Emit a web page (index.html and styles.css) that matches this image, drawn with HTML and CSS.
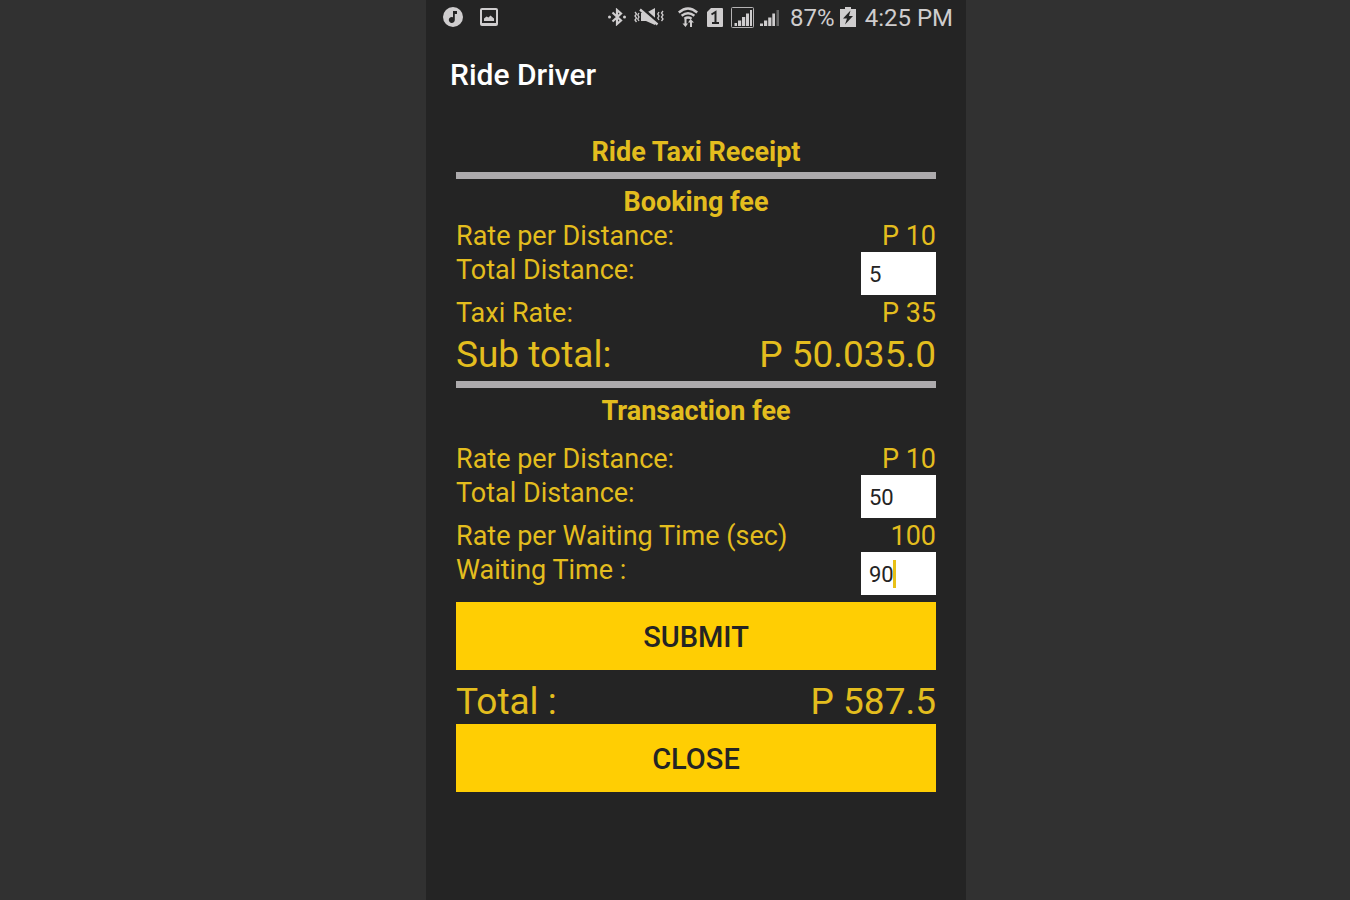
FILE: index.html
```html
<!DOCTYPE html>
<html lang="en">
<head>
<meta charset="utf-8">
<meta name="viewport" content="width=device-width, initial-scale=1">
<title>Ride Driver</title>
<link rel="stylesheet" href="styles.css">
</head>
<body>
<div class="phone">
  <div class="status">
    <div class="status-left">
      <svg width="20" height="20" viewBox="0 0 20 20" aria-label="Music"><circle cx="10" cy="10" r="10" fill="#cfcdce"/><path d="M10 4h4v3h-2.200v6a3 3 0 1 1-1.800-2.800z" fill="#242424"/></svg>
      <svg width="18" height="18" viewBox="0 0 18 18" aria-label="Picture"><rect x="1" y="1" width="16" height="16" rx="1" fill="none" stroke="#cfcdce" stroke-width="2"/><path d="M1 15h16v2H1zM4 13v-2.500l2.500-2 2 1 2-2 3.500 3v2.500z" fill="#cfcdce"/></svg>
    </div>
    <div class="status-right">
      <svg class="bluetooth" width="18" height="18" viewBox="0 0 18 18" aria-label="Bluetooth"><path d="M4.500 4.500l8.500 8L9 16V2l4 3.500-8.500 8" fill="none" stroke="#cfcdce" stroke-width="2.200"/><circle cx="1.500" cy="9" r="1.500" fill="#cfcdce"/><circle cx="16.500" cy="9" r="1.500" fill="#cfcdce"/></svg>
      <svg class="mute" width="30" height="18" viewBox="0 0 30 18" aria-label="Vibrate"><path d="M7 5h5l9-5v17l-9-4H7z" fill="#cfcdce"/><path d="M7 0l17 15" stroke="#242424" stroke-width="4"/><path d="M6 1.500l17.500 15" stroke="#cfcdce" stroke-width="2.400"/><path d="M1 4l1.500 2L1 8l1.500 2L1 12l1.500 2M5 5L3.800 7 5 9l-1.200 2L5 13M29 3l-1.500 2L29 7l-1.500 2 1.500 2-1.500 2M25 4l-1.200 2L25 8l-1.200 2 1.200 2" fill="none" stroke="#cfcdce" stroke-width="1.300"/></svg>
      <svg class="wifi" width="20" height="20" viewBox="0 0 20 20" aria-label="Wi-Fi"><g fill="none" stroke="#cfcdce" stroke-width="2.400"><path d="M.800 5.500q9.200-8 18.400 0M3.600 8.800q6.400-5 12.800 0M6.400 11.800q3.600-2.500 7.200 0"/></g><path d="M7.500 20L4.500 16.500h2V12h2v4.500h1.500zM12.500 12l3.500 3.500h-2V20h-2v-4.500h-2z" fill="#cfcdce"/></svg>
      <svg class="sim" width="16" height="19" viewBox="0 0 16 19" aria-label="SIM 1"><path d="M4 0h11a1 1 0 0 1 1 1v17a1 1 0 0 1-1 1H1a1 1 0 0 1-1-1V4z" fill="#cfcdce"/><path d="M4.500 6.500L8.500 4v11M5 15h7" fill="none" stroke="#242424" stroke-width="2"/></svg>
      <svg class="boxed" width="23" height="21" viewBox="0 0 23 21" aria-label="Signal 1"><rect x=".500" y=".500" width="22" height="20" rx="1" fill="none" stroke="#b5b3b4"/><path d="M3.500 16H6v3H3.500zM7 13.500h3.200V19H7zM11 10h3.200v9H11zM15 6.500h3V19h-3zM19 3h2v16h-2z" fill="#cfcdce"/></svg>
      <svg class="signal" width="20" height="18" viewBox="0 0 20 18" aria-label="Signal 2"><path d="M0 15.500h3V18H0zM4 12.500h3.200V18H4zM8.200 9.500h3.200V18H8.200zM12.300 5.500h2.700V18h-2.700z" fill="#cfcdce"/><path d="M16.500 2h2.500v16h-2.500z" fill="#666"/></svg>
      <span>87%</span>
      <svg class="battery" width="16" height="21" viewBox="0 0 16 21" aria-label="Charging"><path d="M5 0h6v2h5v18H0V2h5z" fill="#cfcdce"/><path d="M10.500 3.500L3 11.500h4l-2 6L13 9H9z" fill="#242424"/></svg>
      <span>4:25 PM</span>
    </div>
  </div>
  <header class="appbar"><h1>Ride Driver</h1></header>
  <form class="receipt">
    <h2 class="heading">Ride Taxi Receipt</h2>
    <hr class="rule">
    <h2 class="heading">Booking fee</h2>
    <div class="row"><span>Rate per Distance:</span><span>P 10</span></div>
    <div class="row entry"><label for="booking-distance">Total Distance:</label><input id="booking-distance" class="field" type="text" value="5"></div>
    <div class="row"><span>Taxi Rate:</span><span>P 35</span></div>
    <div class="row sum"><span>Sub total:</span><span>P 50.035.0</span></div>
    <hr class="rule">
    <h2 class="heading transaction">Transaction fee</h2>
    <div class="row"><span>Rate per Distance:</span><span>P 10</span></div>
    <div class="row entry"><label for="trip-distance">Total Distance:</label><input id="trip-distance" class="field" type="text" value="50"></div>
    <div class="row"><span>Rate per Waiting Time (sec)</span><span>100</span></div>
    <div class="row entry"><label for="waiting">Waiting Time :</label><span class="active"><input id="waiting" class="field" type="text" value="90"><i class="caret"></i></span></div>
    <button class="action" type="button">SUBMIT</button>
    <div class="row sum total"><span>Total :</span><span>P 587.5</span></div>
    <button class="action" type="button">CLOSE</button>
  </form>
</div>
</body>
</html>
```
FILE: styles.css
```css
* { box-sizing: border-box; }
body {
  margin: 0;
  background: #313131;
  color: #e3bd1e;
  font-family: Roboto, "Liberation Sans", sans-serif;
  font-size: 27px;
  line-height: 34px;
}
.phone {
  width: 40%;
  min-width: 540px;
  min-height: 100vh;
  margin-left: calc(30% + 21px);
  background: #242424;
}
.status {
  display: flex;
  justify-content: space-between;
  height: 36px;
  padding: 0 13px 0 17px;
  color: #cfcdce;
  font-size: 24px;
}
.status-left, .status-right { display: flex; align-items: center; }
.status-left { gap: 17px; }
.status svg { margin-bottom: 2px; }
.bluetooth { margin-right: 8px; }
.mute { margin-right: 14px; }
.wifi { margin-right: 9px; }
.sim { margin-right: 8px; }
.boxed { margin-right: 6px; }
.signal { margin-right: 10px; }
.battery { margin: 0 9px 0 5px; }
.appbar { padding: 22px 24px 21px; }
.appbar h1 {
  margin: 0;
  color: #fff;
  font-size: 30px;
  font-weight: 500;
}
.receipt { padding: 22px 30px; }
.heading {
  margin: 0;
  font-size: 27px;
  font-weight: 700;
  text-align: center;
}
.rule {
  height: 7px;
  margin: 3px 0 6px;
  border: 0;
  background: #adabad;
}
.row { display: flex; justify-content: space-between; }
.entry { height: 43px; }
.transaction { margin-bottom: 14px; }
.field {
  display: block;
  width: 75px;
  height: 43px;
  margin-top: -1px;
  padding: 2px 8px 0;
  border: 0;
  border-radius: 0;
  outline: 0;
  background: #fff;
  color: #242424;
  font: 22px Roboto, "Liberation Sans", sans-serif;
}
.active { position: relative; }
.caret {
  position: absolute;
  left: 32px;
  top: 7px;
  width: 3px;
  height: 28px;
  background: #e8c118;
}
.sum {
  padding-top: 2px;
  font-size: 37px;
  line-height: 46px;
}
.total { margin-top: 8px; line-height: 44px; }
.action {
  display: block;
  width: 100%;
  height: 68px;
  margin-top: 6px;
  padding: 2px 0 0;
  border: 0;
  background: #ffce03;
  color: #242424;
  font: 500 29px Roboto, "Liberation Sans", sans-serif;
}
.total + .action { margin-top: 0; }
```
